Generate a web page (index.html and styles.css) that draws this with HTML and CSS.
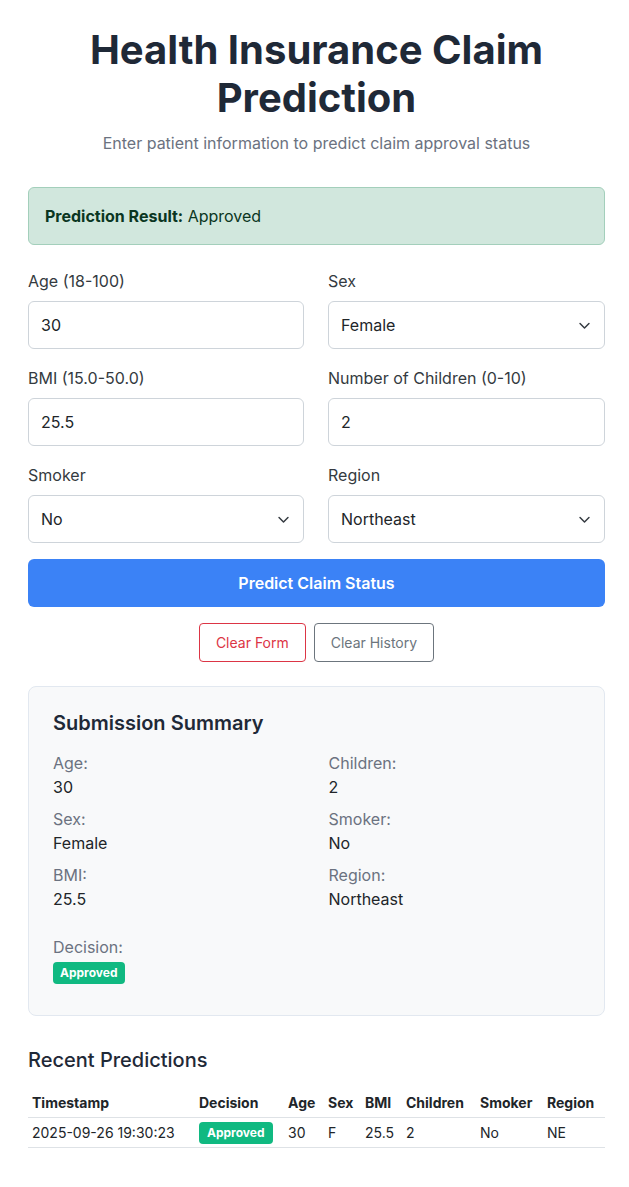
FILE: index.html
```html
<!DOCTYPE html>
<html lang="en">
<head>
<meta charset="utf-8">
<title>Health Insurance Claim Prediction</title>
<link rel="stylesheet" href="styles.css">
</head>
<body>
<main class="container">
  <header class="page-header">
    <h1 class="title">Health Insurance Claim Prediction</h1>
    <p class="subtitle">Enter patient information to predict claim approval status</p>
  </header>

  <div class="alert"><strong>Prediction Result:</strong> Approved</div>

  <form class="form">
    <div class="form-grid">
      <div class="field">
        <label class="label">Age (18-100)</label>
        <div class="control">30</div>
      </div>
      <div class="field">
        <label class="label">Sex</label>
        <div class="control select">Female<svg class="chev" width="13" height="13" viewBox="0 0 16 16"><path d="M2.5 5.5l5.5 5.5 5.5-5.5" fill="none" stroke="#343a40" stroke-width="1.8" stroke-linecap="round" stroke-linejoin="round"/></svg></div>
      </div>
      <div class="field">
        <label class="label">BMI (15.0-50.0)</label>
        <div class="control">25.5</div>
      </div>
      <div class="field">
        <label class="label">Number of Children (0-10)</label>
        <div class="control">2</div>
      </div>
      <div class="field">
        <label class="label">Smoker</label>
        <div class="control select">No<svg class="chev" width="13" height="13" viewBox="0 0 16 16"><path d="M2.5 5.5l5.5 5.5 5.5-5.5" fill="none" stroke="#343a40" stroke-width="1.8" stroke-linecap="round" stroke-linejoin="round"/></svg></div>
      </div>
      <div class="field">
        <label class="label">Region</label>
        <div class="control select">Northeast<svg class="chev" width="13" height="13" viewBox="0 0 16 16"><path d="M2.5 5.5l5.5 5.5 5.5-5.5" fill="none" stroke="#343a40" stroke-width="1.8" stroke-linecap="round" stroke-linejoin="round"/></svg></div>
      </div>
    </div>
    <button type="button" class="btn-primary">Predict Claim Status</button>
    <div class="secondary-actions">
      <button type="button" class="btn-outline btn-danger">Clear Form</button>
      <button type="button" class="btn-outline btn-gray">Clear History</button>
    </div>
  </form>

  <section class="summary">
    <h2 class="summary-title">Submission Summary</h2>
    <div class="summary-grid">
      <div class="item"><div class="item-label">Age:</div><div class="item-value">30</div></div>
      <div class="item"><div class="item-label">Children:</div><div class="item-value">2</div></div>
      <div class="item"><div class="item-label">Sex:</div><div class="item-value">Female</div></div>
      <div class="item"><div class="item-label">Smoker:</div><div class="item-value">No</div></div>
      <div class="item"><div class="item-label">BMI:</div><div class="item-value">25.5</div></div>
      <div class="item"><div class="item-label">Region:</div><div class="item-value">Northeast</div></div>
    </div>
    <div class="decision">
      <div class="item-label">Decision:</div>
      <span class="badge">Approved</span>
    </div>
  </section>

  <section class="history">
    <h2 class="history-title">Recent Predictions</h2>
    <table class="table">
      <thead>
        <tr>
          <th class="c-ts">Timestamp</th>
          <th class="c-dec">Decision</th>
          <th class="c-age">Age</th>
          <th class="c-sex">Sex</th>
          <th class="c-bmi">BMI</th>
          <th class="c-ch">Children</th>
          <th class="c-sm">Smoker</th>
          <th class="c-reg">Region</th>
        </tr>
      </thead>
      <tbody>
        <tr>
          <td>2025-09-26 19:30:23</td>
          <td><span class="badge badge-sm">Approved</span></td>
          <td>30</td>
          <td>F</td>
          <td>25.5</td>
          <td>2</td>
          <td>No</td>
          <td>NE</td>
        </tr>
      </tbody>
    </table>
  </section>
</main>
</body>
</html>
```

FILE: styles.css
```css
* { box-sizing: border-box; }

html, body {
  margin: 0;
  padding: 0;
  background: #ffffff;
}

body {
  font-family: Inter, "Noto Sans", "Liberation Sans", sans-serif;
  color: #212529;
  font-size: 16px;
  line-height: 1.5;
}

.container {
  padding: 26px 24px 40px 28px;
}

.page-header {
  text-align: center;
}

.title {
  margin: 0;
  font-size: 40px;
  line-height: 48px;
  font-weight: 700;
  color: #1f2937;
}

.subtitle {
  margin: 9px 0 0;
  font-size: 16px;
  line-height: 24px;
  color: #6b7280;
}

.alert {
  margin-top: 32px;
  padding: 16px;
  background: #d1e7dd;
  border: 1px solid #a3cfbb;
  border-radius: 6px;
  color: #0a3622;
  line-height: 24px;
}

.alert strong { font-weight: 700; }

.form { margin-top: 24px; }

.form-grid {
  display: grid;
  grid-template-columns: 276fr 277fr;
  column-gap: 24px;
  row-gap: 17px;
}

.label {
  display: block;
  font-size: 16px;
  line-height: 24px;
  color: #343a40;
  margin-bottom: 8px;
}

.control {
  height: 48px;
  border: 1px solid #ced4da;
  border-radius: 6px;
  padding: 0 12px;
  display: flex;
  align-items: center;
  font-size: 16px;
  color: #212529;
  background: #fff;
}

.select { justify-content: space-between; }
.chev { margin-right: 1px; }

.btn-primary {
  display: block;
  width: 100%;
  height: 48px;
  margin-top: 16px;
  border: none;
  border-radius: 6px;
  background: #3b82f6;
  color: #fff;
  font-family: inherit;
  font-size: 16px;
  font-weight: 600;
  cursor: pointer;
}

.secondary-actions {
  display: flex;
  justify-content: center;
  gap: 8px;
  margin-top: 16px;
}

.btn-outline {
  height: 39px;
  padding: 0 16px;
  background: #fff;
  border-radius: 4px;
  font-family: inherit;
  font-size: 14px;
  border: 1px solid;
}

.btn-danger { border-color: #dc3545; color: #dc3545; }
.btn-gray { border-color: #6c757d; color: #6c757d; }

.summary {
  margin-top: 24px;
  padding: 24px 24px 31px;
  background: #f8f9fa;
  border: 1px solid #e2e8f0;
  border-radius: 8px;
}

.summary-title {
  margin: 0 0 16px;
  font-size: 20px;
  line-height: 24px;
  font-weight: 600;
  color: #1f2937;
}

.summary-grid {
  display: grid;
  grid-template-columns: 1fr 1fr;
  column-gap: 24px;
  row-gap: 8px;
}

.item-label {
  color: #6b7280;
  line-height: 24px;
}

.item-value {
  color: #212529;
  line-height: 24px;
}

.decision { margin-top: 24px; }

.badge {
  display: inline-block;
  background: #10b981;
  color: #fff;
  font-size: 12px;
  font-weight: 700;
  line-height: 16px;
  padding: 3px 7px;
  border-radius: 4px;
}

.badge-sm {
  padding: 3px 8px;
  vertical-align: middle;
}

.history { margin-top: 30px; }

.history-title {
  margin: 0 0 15px;
  font-size: 20px;
  line-height: 28px;
  font-weight: 500;
  color: #1f2937;
}

.table {
  width: 100%;
  border-collapse: collapse;
  font-size: 14px;
}

.table th {
  text-align: left;
  font-weight: 700;
  padding: 4px;
  line-height: 20px;
  border-bottom: 1px solid #dee2e6;
}

.table td {
  padding: 4px 4px 3px;
  line-height: 20px;
  border-bottom: 1px solid #dee2e6;
}

.c-ts { width: 167px; }
.c-dec { width: 89px; }
.c-age { width: 40px; }
.c-sex { width: 37px; }
.c-bmi { width: 41px; }
.c-ch { width: 74px; }
.c-sm { width: 67px; }
.c-reg { width: 62px; }
```
